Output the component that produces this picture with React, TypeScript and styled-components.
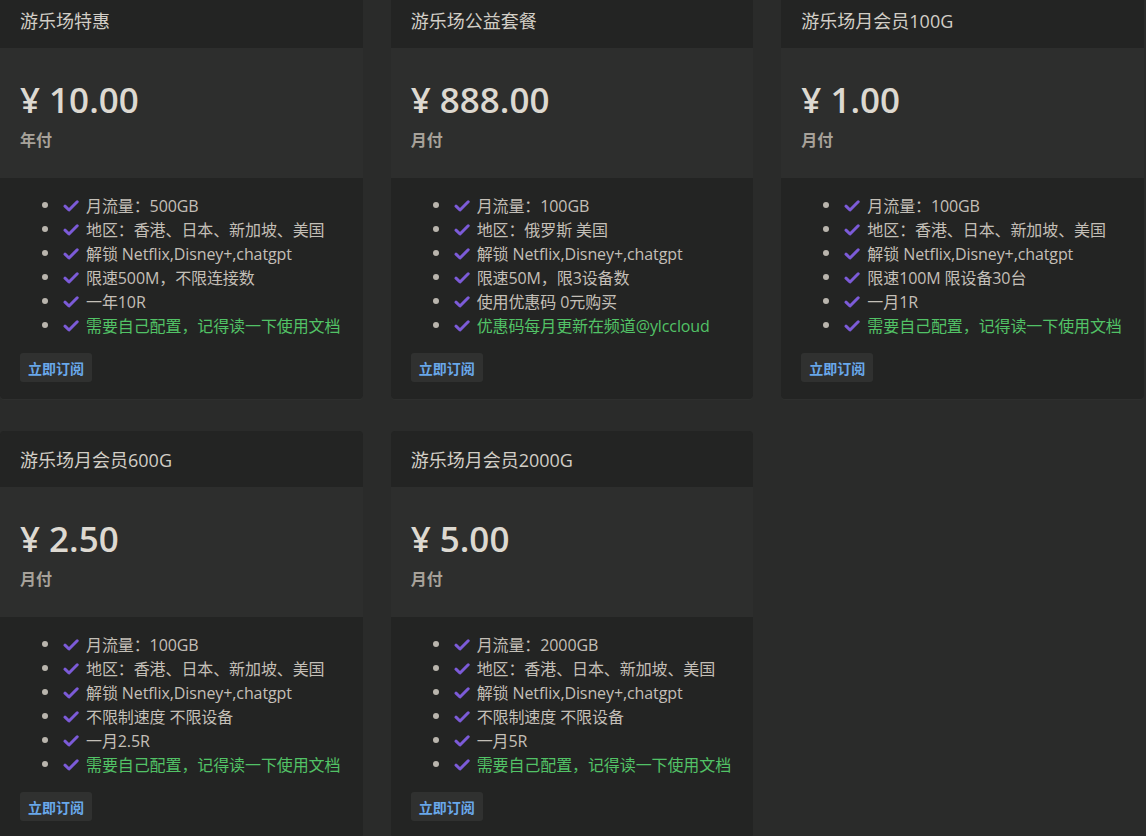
import * as React from "react";
import styled, { createGlobalStyle } from "styled-components";

const GlobalStyle = createGlobalStyle`
  html, body {
    margin: 0;
    padding: 0;
    background-color: #2a2b2a;
    overflow: hidden;
  }
  body {
    font-family: "Open Sans", "Noto Sans CJK SC", sans-serif;
    color: #c6c2ba;
  }
`;

type Feature = { text: string; highlight?: boolean };

type Plan = {
  name: string;
  price: string;
  period: string;
  features: Feature[];
};

const REGIONS = "地区：香港、日本、新加坡、美国";
const UNLOCK = "解锁 Netflix,Disney+,chatgpt";
const DOCS = "需要自己配置，记得读一下使用文档";

const plans: Plan[] = [
  {
    name: "游乐场特惠",
    price: "10.00",
    period: "年付",
    features: [
      { text: "月流量：500GB" },
      { text: REGIONS },
      { text: UNLOCK },
      { text: "限速500M，不限连接数" },
      { text: "一年10R" },
      { text: DOCS, highlight: true },
    ],
  },
  {
    name: "游乐场公益套餐",
    price: "888.00",
    period: "月付",
    features: [
      { text: "月流量：100GB" },
      { text: "地区：俄罗斯 美国" },
      { text: UNLOCK },
      { text: "限速50M，限3设备数" },
      { text: "使用优惠码 0元购买" },
      { text: "优惠码每月更新在频道@ylccloud", highlight: true },
    ],
  },
  {
    name: "游乐场月会员100G",
    price: "1.00",
    period: "月付",
    features: [
      { text: "月流量：100GB" },
      { text: REGIONS },
      { text: UNLOCK },
      { text: "限速100M 限设备30台" },
      { text: "一月1R" },
      { text: DOCS, highlight: true },
    ],
  },
  {
    name: "游乐场月会员600G",
    price: "2.50",
    period: "月付",
    features: [
      { text: "月流量：100GB" },
      { text: REGIONS },
      { text: UNLOCK },
      { text: "不限制速度 不限设备" },
      { text: "一月2.5R" },
      { text: DOCS, highlight: true },
    ],
  },
  {
    name: "游乐场月会员2000G",
    price: "5.00",
    period: "月付",
    features: [
      { text: "月流量：2000GB" },
      { text: REGIONS },
      { text: UNLOCK },
      { text: "不限制速度 不限设备" },
      { text: "一月5R" },
      { text: DOCS, highlight: true },
    ],
  },
];

const PlanGrid = styled.div`
  display: grid;
  grid-template-columns: repeat(3, 1fr);
  column-gap: 28px;
  row-gap: 32px;
  margin: -8px 2px 0 0;
`;

const Card = styled.div`
  background-color: #232423;
  border-radius: 4px;
  overflow: hidden;
  box-shadow: 0 1px 0 #2e2f2e;
`;

const CardHeader = styled.div`
  height: 56px;
  display: flex;
  align-items: center;
  padding: 0 20px;
  font-size: 18px;
  color: #d2cec6;
`;

const PriceBlock = styled.div`
  height: 130px;
  box-sizing: border-box;
  background-color: #2d2e2d;
  padding: 30px 20px 0;
`;

const Price = styled.div`
  font-size: 35px;
  font-weight: 600;
  line-height: 44px;
  color: #ddd9d1;
`;

const Period = styled.div`
  margin-top: 6px;
  font-size: 16px;
  font-weight: 700;
  line-height: 24px;
  color: #a7a29a;
`;

const FeatureBlock = styled.div`
  padding: 15px 20px 17px;
`;

const FeatureList = styled.ul`
  list-style: none;
  margin: 0 0 16px;
  padding: 0 0 0 22px;
`;

const FeatureItem = styled.li<{ $highlight?: boolean }>`
  display: flex;
  align-items: center;
  height: 24px;
  font-size: 16px;
  letter-spacing: -0.1px;
  white-space: nowrap;
  color: ${(p) => (p.$highlight ? "#52c266" : "#c3bfb7")};

  &::before {
    content: "";
    width: 6px;
    height: 6px;
    border-radius: 50%;
    background-color: #b9b5ad;
    margin-right: 15px;
    flex-shrink: 0;
  }
`;

const CheckIcon = styled.svg`
  width: 16px;
  height: 12px;
  margin: 2px 7px 0 0;
  flex-shrink: 0;
`;

const SubscribeButton = styled.button`
  height: 29px;
  padding: 0 8px;
  border: none;
  border-radius: 3px;
  background-color: #303130;
  color: #69a8ea;
  font-family: "Open Sans", "Noto Sans CJK SC", sans-serif;
  font-size: 14px;
  font-weight: 700;
  cursor: pointer;
`;

const Check = () => (
  <CheckIcon viewBox="0 0 16 12">
    <path
      d="M2 6.2 L6 10 L14.2 1.8"
      fill="none"
      stroke="#7c5bd8"
      strokeWidth="3"
      strokeLinecap="round"
      strokeLinejoin="round"
    />
  </CheckIcon>
);

const PlanCard = ({ plan }: { plan: Plan }) => (
  <Card>
    <CardHeader>{plan.name}</CardHeader>
    <PriceBlock>
      <Price>¥ {plan.price}</Price>
      <Period>{plan.period}</Period>
    </PriceBlock>
    <FeatureBlock>
      <FeatureList>
        {plan.features.map((f, i) => (
          <FeatureItem key={i} $highlight={f.highlight}>
            <Check />
            {f.text}
          </FeatureItem>
        ))}
      </FeatureList>
      <SubscribeButton>立即订阅</SubscribeButton>
    </FeatureBlock>
  </Card>
);

export default function App() {
  return (
    <>
      <GlobalStyle />
      <PlanGrid>
        {plans.map((p) => (
          <PlanCard key={p.name} plan={p} />
        ))}
      </PlanGrid>
    </>
  );
}
